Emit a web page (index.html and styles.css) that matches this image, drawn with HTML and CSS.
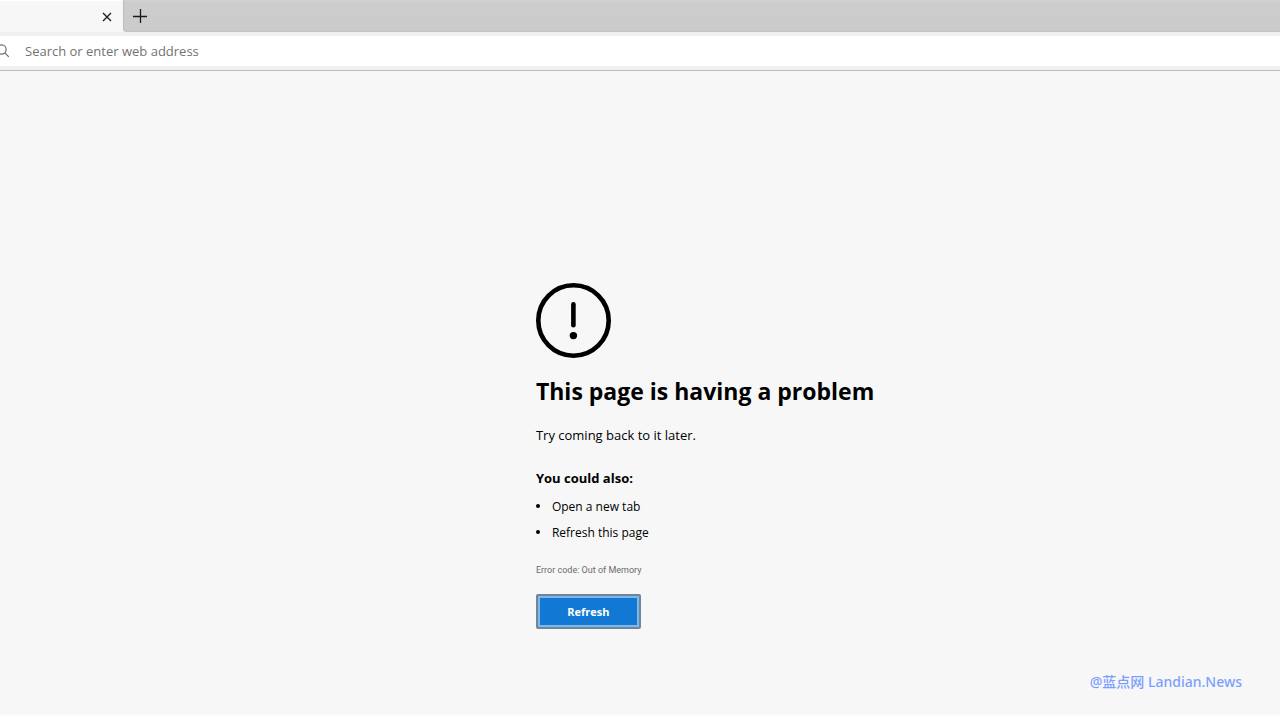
FILE: index.html
```html
<!DOCTYPE html>
<html lang="en">
<head>
<meta charset="utf-8">
<meta name="viewport" content="width=device-width, initial-scale=1">
<title>This page is having a problem</title>
<link rel="stylesheet" href="styles.css">
</head>
<body>
<header class="browser">
  <div class="tab-strip">
    <div class="tab">
      <button class="icon-button close" type="button" aria-label="Close tab"><svg width="10" height="10" viewBox="0 0 10 10"><path d="M1 1l8 8M9 1L1 9"/></svg></button>
    </div>
    <div class="strip-rest">
      <button class="icon-button new-tab" type="button" aria-label="New tab"><svg width="14" height="14" viewBox="0 0 14 14"><path d="M7.5 0v14M0 7.5h14"/></svg></button>
    </div>
  </div>
  <div class="toolbar">
    <label class="address">
      <svg class="search-icon" width="9" height="16" viewBox="0 0 9 16" aria-hidden="true"><circle cx="1.5" cy="6.5" r="4.6"/><path d="M4.8 9.9l4 4"/></svg>
      <input class="address-input" type="text" aria-label="Address" placeholder="Search or enter web address">
    </label>
  </div>
</header>
<main class="page">
  <section class="error">
    <svg class="error-icon" width="75" height="75" viewBox="0 0 75 75" aria-hidden="true"><circle cx="37.5" cy="37.5" r="35.2" fill="none" stroke="#000" stroke-width="4.6"/><path d="M37.4 21.2v21" fill="none" stroke="#000" stroke-width="4.6" stroke-linecap="round"/><circle cx="37.4" cy="52.6" r="3.7"/></svg>
    <h1 class="title">This page is having a problem</h1>
    <p class="message">Try coming back to it later.</p>
    <h2 class="subtitle">You could also:</h2>
    <ul class="options">
      <li class="option">Open a new tab</li>
      <li class="option">Refresh this page</li>
    </ul>
    <p class="code">Error code: Out of Memory</p>
    <button class="refresh" type="button">Refresh</button>
  </section>
  <p class="credit">@蓝点网 Landian.News</p>
</main>
</body>
</html>
```
FILE: styles.css
```css
* {
  box-sizing: border-box;
}

body {
  margin: 0;
  min-height: 100vh;
  display: flex;
  flex-direction: column;
  background: #f7f7f7;
  color: #000;
  font-family: "Open Sans", "Noto Sans", "Noto Sans CJK SC", sans-serif;
}

.tab-strip {
  display: flex;
  height: 32px;
  background: #f7f7f7;
}

.tab {
  display: flex;
  flex: none;
  align-items: center;
  justify-content: flex-end;
  width: 123px;
  padding-right: 6px;
  border-top: 1px solid #fff;
}

.strip-rest {
  display: flex;
  flex: 1;
  border-radius: 0 0 0 4px;
  background: linear-gradient(#d2d2d2 2px, #cdcdcd 2px, #cbcbcb 30px, #c2c2c2);
  box-shadow: inset 1px 0 1px #bdbdbd;
}

.icon-button {
  display: flex;
  align-items: center;
  justify-content: center;
  width: 20px;
  padding: 0;
  border: 0;
  background: none;
}

.icon-button path {
  fill: none;
  stroke: #1b1b1b;
  stroke-width: 1.3;
}

.new-tab {
  width: 34px;
}

.toolbar {
  padding: 4px 0;
  border-bottom: 1px solid #bdbdbd;
  background: #f0f0f0;
}

.address {
  display: flex;
  align-items: center;
  gap: 16px;
  height: 30px;
  background: #fff;
}

.search-icon {
  fill: none;
  stroke: #6b6b6b;
  stroke-width: 1.2;
}

.address-input {
  flex: 1;
  min-width: 0;
  padding: 0;
  border: 0;
  outline: 0;
  background: none;
  font: 13px/20px "Open Sans", "Noto Sans", sans-serif;
}

.address-input::placeholder {
  color: #737373;
  opacity: 1;
}

.page {
  flex: 1;
  display: flex;
  flex-direction: column;
  justify-content: space-between;
  padding: 212px 38px 22px 0;
  border-bottom: 2px solid #fdfdfd;
}

.error {
  display: flex;
  flex-direction: column;
  align-items: flex-start;
  margin-left: 43.15%;
}

.title {
  margin: 15px 0 0;
  font-size: 23px;
  font-weight: 700;
  line-height: 36px;
}

.message {
  margin: 16px 0 0;
  font-size: 13px;
  line-height: 20px;
}

.subtitle {
  margin: 23px 0 0;
  font-size: 13px;
  font-weight: 700;
  line-height: 20px;
}

.options {
  margin: 6px 0 0;
  padding: 0;
  list-style: none;
  font-size: 12px;
  line-height: 26px;
}

.option {
  display: flex;
}

.option::before {
  content: "";
  width: 4px;
  height: 4px;
  margin: 10px 12px 0 0;
  border-radius: 50%;
  background: #000;
}

.code {
  margin: 16px 0 0;
  color: #6b6b6b;
  font-family: Roboto, "Open Sans", sans-serif;
  font-size: 9px;
  line-height: 16px;
}

.refresh {
  min-width: 105px;
  height: 35px;
  margin-top: 16px;
  padding: 0 24px;
  border: 2px solid #71859a;
  border-radius: 2px;
  background: #1179d3;
  box-shadow: inset 0 0 0 2px #7cb8ec;
  color: #fff;
  font: 700 11px/20px "Open Sans", "Noto Sans", sans-serif;
}

.credit {
  align-self: flex-end;
  margin: 0;
  color: #7c9fff;
  font-family: "Noto Sans", "Noto Sans CJK SC", sans-serif;
  font-size: 14px;
  font-weight: 500;
  line-height: 22px;
}
```
